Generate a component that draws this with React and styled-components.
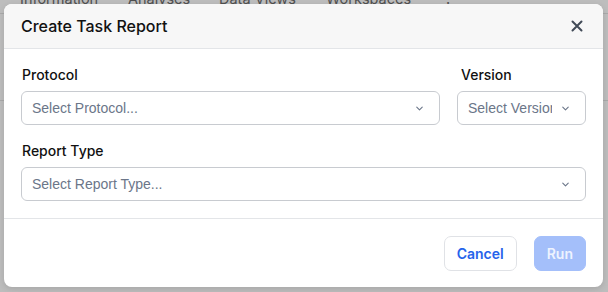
import React from 'react';
import styled, { createGlobalStyle } from 'styled-components';

const Global = createGlobalStyle`
  html, body { margin: 0; padding: 0; }
  body {
    width: 608px;
    height: 292px;
    overflow: hidden;
    background: #bdbdbd;
    font-family: Inter, "Noto Sans", "Liberation Sans", sans-serif;
  }
`;

const Backdrop = styled.div`
  position: relative;
  width: 608px;
  height: 292px;
  overflow: hidden;
  background: #bdbdbd;
`;

const TabStrip = styled.div`
  display: flex;
  height: 25px;
  margin-top: -11px;
  padding-left: 20px;
  border-bottom: 1px solid #a9a9a9;
  box-sizing: border-box;
  font-size: 14.5px;
  color: #505050;
  line-height: 20px;
`;

const Tab = styled.span`
  flex: 0 0 ${p => p.$w}px;
  white-space: nowrap;
`;

const Rule = styled.div`
  margin-top: 86px;
  border-top: 1px solid #a9a9a9;
`;

const Modal = styled.div`
  position: absolute;
  left: 4px;
  top: 4px;
  width: 599px;
  height: 283px;
  background: #fff;
  border-radius: 8px;
  overflow: hidden;
  box-shadow: 0 2px 6px rgba(0, 0, 0, 0.12);
  display: flex;
  flex-direction: column;
`;

const Header = styled.div`
  flex: 0 0 auto;
  height: 44px;
  display: flex;
  align-items: center;
  justify-content: space-between;
  padding: 0 17px;
  background: #f7f7f7;
  border-bottom: 1px solid #e3e5e8;
`;

const Title = styled.h2`
  margin: 0;
  font-size: 16px;
  font-weight: 500;
  color: #111;
`;

const Close = styled.button`
  border: 0;
  background: none;
  padding: 0;
  width: 18px;
  height: 18px;
  display: flex;
  align-items: center;
  justify-content: center;
  color: #414a57;
  cursor: pointer;
`;

const Body = styled.div`
  flex: 0 0 auto;
  padding: 18px 17px 17px;
  display: grid;
  grid-template-columns: 1fr 129px;
  column-gap: 17px;
  row-gap: 18px;
  border-bottom: 1px solid #e3e5e8;
`;

const Field = styled.div`
  display: flex;
  flex-direction: column;
  gap: 8px;
  grid-column: ${p => (p.$full ? '1 / -1' : 'auto')};
`;

const Label = styled.label`
  font-size: 14px;
  font-weight: 500;
  color: #111;
  line-height: 16px;
  padding-left: ${p => p.$indent || 0}px;
`;

const SelectBox = styled.div`
  height: 34px;
  box-sizing: border-box;
  border: 1px solid #c8cbd0;
  border-radius: 6px;
  display: flex;
  align-items: center;
  padding: 0 14px 0 10px;
  gap: 8px;
  background: #fff;
`;

const Placeholder = styled.span`
  flex: 1;
  min-width: 0;
  overflow: hidden;
  white-space: nowrap;
  font-family: "Liberation Sans", Arial, sans-serif;
  font-size: 14px;
  color: #6b7689;
`;

const Footer = styled.div`
  flex: 1;
  display: flex;
  justify-content: flex-end;
  align-items: center;
  gap: 17px;
  padding: 0 17px;
`;

const Button = styled.button`
  height: 35px;
  padding: 0 12px;
  border-radius: 7px;
  font-family: inherit;
  font-size: 14px;
  font-weight: 600;
  border: 1px solid ${p => (p.$primary ? '#a4bffa' : '#e0e2e6')};
  background: ${p => (p.$primary ? '#a4bffa' : '#fff')};
  color: ${p => (p.$primary ? '#eef3ff' : '#2563eb')};
`;

const Chevron = () => (
  <svg width="11" height="11" viewBox="0 0 24 24" fill="none" stroke="#6b7689" strokeWidth="2.4" strokeLinecap="round" strokeLinejoin="round">
    <path d="m6 9 6 6 6-6" />
  </svg>
);

const Select = ({ placeholder }) => (
  <SelectBox>
    <Placeholder>{placeholder}</Placeholder>
    <Chevron />
  </SelectBox>
);

export default function App() {
  return (
    <Backdrop>
      <Global />
      <TabStrip>
        <Tab $w={108}>Information</Tab>
        <Tab $w={91}>Analyses</Tab>
        <Tab $w={107}>Data Views</Tab>
        <Tab $w={120}>Workspaces</Tab>
        <Tab $w={10}>:</Tab>
      </TabStrip>
      <Rule />
      <Modal>
        <Header>
          <Title>Create Task Report</Title>
          <Close aria-label="Close">
            <svg width="12" height="12" viewBox="0 0 12 12" stroke="currentColor" strokeWidth="2" strokeLinecap="round">
              <path d="M1.5 1.5l9 9M10.5 1.5l-9 9" />
            </svg>
          </Close>
        </Header>
        <Body>
          <Field>
            <Label $indent={1}>Protocol</Label>
            <Select placeholder="Select Protocol..." />
          </Field>
          <Field>
            <Label $indent={4}>Version</Label>
            <Select placeholder="Select Version..." />
          </Field>
          <Field $full>
            <Label $indent={1}>Report Type</Label>
            <Select placeholder="Select Report Type..." />
          </Field>
        </Body>
        <Footer>
          <Button>Cancel</Button>
          <Button $primary disabled>Run</Button>
        </Footer>
      </Modal>
    </Backdrop>
  );
}
